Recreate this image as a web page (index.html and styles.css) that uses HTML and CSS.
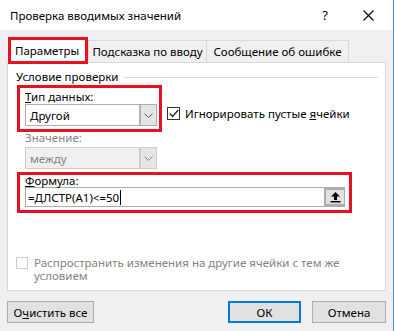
FILE: index.html
```html
<!DOCTYPE html>
<html lang="ru">
<head>
    <meta charset="UTF-8">
    <title>Проверка вводимых значений</title>
    <link rel="stylesheet" href="styles.css">
</head>
<body>
    <div class="window">
        <div class="titlebar">
            <span class="title">Проверка вводимых значений</span>
            <span class="help">?</span>
            <span class="close">
                <svg width="11" height="11" viewBox="0 0 11 11"><path d="M0.5 0.5 L10.5 10.5 M10.5 0.5 L0.5 10.5" stroke="#000" stroke-width="1.1" fill="none"/></svg>
            </span>
        </div>

        <div class="content">
            <div class="tabs">
                <div class="tab tab-active">Параметры</div>
                <div class="tab">Подсказка по вводу</div>
                <div class="tab tab-last">Сообщение об ошибке</div>
            </div>

            <div class="panel">
                <div class="group-title">
                    <span>Условие проверки</span>
                    <span class="rule"></span>
                </div>

                <div class="type-row">
                    <div class="mark type-box">
                        <div class="label"><u>Т</u>ип данных:</div>
                        <div class="select">
                            <span class="select-text">Другой</span>
                            <span class="drop">
                                <svg width="9" height="5" viewBox="0 0 9 5"><path d="M0.5 0.5 L4.5 4.5 L8.5 0.5" stroke="#555" fill="none"/></svg>
                            </span>
                        </div>
                    </div>
                    <div class="check ignore">
                        <span class="box">
                            <svg width="10" height="9" viewBox="0 0 10 9"><path d="M0.8 4.5 L3.6 7.5 L9.2 1" stroke="#222" stroke-width="1.3" fill="none"/></svg>
                        </span>
                        <span>Игнорировать пустые <u>я</u>чейки</span>
                    </div>
                </div>

                <div class="value-field">
                    <div class="label disabled">Значение:</div>
                    <div class="select select-disabled">
                        <span class="select-text">между</span>
                        <span class="drop">
                            <svg width="9" height="5" viewBox="0 0 9 5"><path d="M0.5 0.5 L4.5 4.5 L8.5 0.5" stroke="#888" fill="none"/></svg>
                        </span>
                    </div>
                </div>

                <div class="mark formula-box">
                    <div class="label"><u>Ф</u>ормула:</div>
                    <div class="input">
                        <span class="input-text">=ДЛСТР(A1)&lt;=50<span class="caret"></span></span>
                        <span class="collapse">
                            <svg width="11" height="12" viewBox="0 0 11 12"><path d="M5.5 1 L1 5.5 H4 V9 H7 V5.5 H10 Z" fill="#000"/><rect x="0.5" y="10" width="10" height="1.5" fill="#000"/></svg>
                        </span>
                    </div>
                </div>

                <div class="check spread disabled">
                    <span class="box box-disabled"></span>
                    <span class="spread-text">Распространить изменения на другие ячейки с тем же условием</span>
                </div>
            </div>

            <div class="buttons">
                <button class="btn btn-clear">О<u>ч</u>истить все</button>
                <span class="spacer"></span>
                <button class="btn btn-ok">ОК</button>
                <button class="btn btn-cancel">Отмена</button>
            </div>
        </div>
    </div>
</body>
</html>
```

FILE: styles.css
```css
body {
    margin: 0;
    font-family: 'Noto Sans', sans-serif;
    font-size: 11.5px;
    color: #000;
    background-color: #f0f0f0;
}

.window {
    width: 393px;
    height: 331px;
    border-right: 1px solid #3d8ee0;
    background-color: #f0f0f0;
    display: flex;
    flex-direction: column;
}

.titlebar {
    height: 30px;
    background-color: #fff;
    display: flex;
    align-items: center;
    padding-left: 10px;
}

.title {
    flex: 1;
}

.help {
    width: 40px;
    text-align: center;
    font-size: 13px;
}

.close {
    width: 46px;
    margin-right: 2px;
    display: flex;
    justify-content: center;
}

.content {
    padding: 7px 7px 0 7px;
}

/* tabs */
.tabs {
    display: flex;
    align-items: flex-end;
    height: 27px;
    margin-bottom: -2px;
    position: relative;
    z-index: 1;
}

.tab {
    box-sizing: border-box;
    height: 22px;
    margin-bottom: 2px;
    border: 1px solid #d9d9d9;
    border-bottom: none;
    display: flex;
    align-items: center;
    justify-content: center;
}

.tab:nth-child(2) {
    width: 119px;
}

.tab-last {
    width: 142px;
    border-left: none;
}

.tab-active {
    width: 80px;
    height: 27px;
    margin-left: 1px;
    margin-bottom: 0;
    border: 3px solid #e81123;
    background-color: #fff;
    justify-content: flex-start;
    padding-left: 4px;
}

/* panel */
.panel {
    box-sizing: border-box;
    width: 379px;
    height: 229px;
    background-color: #fff;
    border: 1px solid #d9d9d9;
    padding: 6px 7px 0 8px;
}

.group-title {
    display: flex;
    align-items: center;
    line-height: 16px;
}

.rule {
    flex: 1;
    height: 1px;
    margin-left: 6px;
    background-color: #dcdcdc;
}

.mark {
    box-sizing: border-box;
    border: 3px solid #e81123;
}

.label {
    line-height: 14px;
}

.disabled {
    color: #838383;
}

.type-row {
    display: flex;
    align-items: flex-start;
}

.type-box {
    width: 145px;
    margin-left: 1px;
    padding: 2px 2px 3px 5px;
}

.select {
    box-sizing: border-box;
    height: 22px;
    border: 1px solid #adadad;
    background-color: #fff;
    display: flex;
    align-items: center;
}

.select-text {
    flex: 1;
    padding-left: 4px;
}

.drop {
    box-sizing: border-box;
    width: 17px;
    height: 100%;
    border-left: 2px solid #b4b4b4;
    background-color: #e5e5e5;
    display: flex;
    align-items: center;
    justify-content: center;
}

.select-disabled {
    background-color: #f0f0f0;
    border-color: #cccccc;
    color: #838383;
}

.select-disabled .drop {
    border-left-color: #cccccc;
}

.check {
    display: flex;
    align-items: center;
}

.box {
    box-sizing: border-box;
    width: 13px;
    height: 13px;
    border: 1px solid #333;
    background-color: #fff;
    display: flex;
    align-items: center;
    justify-content: center;
    margin-right: 5px;
}

.ignore {
    margin: 21px 0 0 5px;
}

.value-field {
    width: 132px;
    margin: -1px 0 0 9px;
}

.value-field .select {
    margin-top: 2px;
}

.formula-box {
    width: 335px;
    margin: 3px 0 0 1px;
    padding: 0 4px 3px 5px;
}

.formula-box .label {
    line-height: 12px;
}

.input {
    box-sizing: border-box;
    height: 20px;
    border: 1px solid #adadad;
    display: flex;
    align-items: center;
}

.input-text {
    flex: 1;
    padding-left: 2px;
    display: flex;
    align-items: center;
}

.caret {
    width: 1px;
    height: 15px;
    background-color: #000;
    margin-left: 1px;
}

.collapse {
    box-sizing: border-box;
    width: 20px;
    height: 100%;
    border: 2px solid #adadad;
    border-right: none;
    background-color: #e1e1e1;
    display: flex;
    align-items: center;
    justify-content: center;
}

.spread {
    align-items: flex-start;
    margin: 44px 0 0 0;
}

.box-disabled {
    border-color: #cccccc;
    width: 12px;
    height: 12px;
    margin-right: 6px;
}

.spread-text {
    width: 310px;
    line-height: 13px;
    margin-top: -1px;
}

/* buttons */
.buttons {
    display: flex;
    margin-top: 10px;
    gap: 11px;
}

.spacer {
    flex: 1;
}

.btn {
    box-sizing: border-box;
    height: 22px;
    border: 1px solid #adadad;
    background-color: #e1e1e1;
    font-family: 'Noto Sans', sans-serif;
    font-size: 11.5px;
    color: #000;
    padding: 0;
}

.btn-clear {
    width: 87px;
}

.btn-ok {
    width: 73px;
    border: 2px solid #0078d7;
}

.btn-cancel {
    width: 74px;
}
```
